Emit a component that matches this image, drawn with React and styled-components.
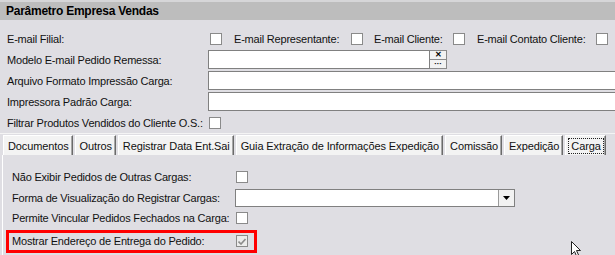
import React from 'react'
import styled, { createGlobalStyle } from 'styled-components'

const GlobalStyle = createGlobalStyle`
    html, body {
        margin: 0;
        padding: 0;
        background: #dfdee3;
    }
    body {
        font-family: "Liberation Sans", Arial, sans-serif;
        font-size: 11px;
        letter-spacing: -0.12px;
        color: #111;
    }
`

const Window = styled.div`
    position: relative;
    width: 615px;
    height: 255px;
    overflow: hidden;
    background: #dfdee3;
`

const Header = styled.div`
    height: 18px;
    border-top: 2px solid #d6d6d8;
    background: #bdbdbd;
    display: flex;
    align-items: center;
    padding-left: 6px;
    font-weight: bold;
    font-size: 12px;
    letter-spacing: -0.25px;
    color: #000;
`

const Form = styled.div`
    display: flex;
    flex-direction: column;
    padding: 8px 0 0 7px;
`

const Row = styled.div`
    display: flex;
    align-items: center;
    height: 21px;
`

const Label = styled.span`
    flex: none;
    width: ${p => p.$w}px;
    margin-left: ${p => p.$ml || 0}px;
    white-space: nowrap;
    letter-spacing: -0.2px;
`

const Check = styled.span`
    flex: none;
    box-sizing: border-box;
    width: 12px;
    height: 12px;
    margin-left: ${p => p.$ml || 0}px;
    border: 1px solid #8a8a8a;
    background: ${p => (p.$checked ? '#ececec' : '#fff')};
    display: flex;
    align-items: center;
    justify-content: center;
`

const Input = styled.div`
    flex: none;
    box-sizing: border-box;
    width: ${p => p.$w}px;
    height: 19px;
    background: #fff;
    border: 1px solid #808080;
`

const SideButtons = styled.div`
    display: flex;
    flex-direction: column;
    height: 19px;
`

const MiniButton = styled.div`
    box-sizing: border-box;
    width: 17px;
    height: 9.5px;
    border: 1px solid #8a8a8a;
    border-left: none;
    background: #f2f2f2;
    display: flex;
    align-items: center;
    justify-content: center;
    font-size: 8px;
    font-weight: bold;
    line-height: 1;
    color: #000;
    & + & {
        border-top: none;
    }
`

const TabStrip = styled.div`
    display: flex;
    padding: 1px 0 0 3px;
    border-top: 1px solid #f4f4f4;
`

const Tab = styled.div`
    box-sizing: border-box;
    height: 20px;
    padding: 0 3px 0 4px;
    margin-right: 2px;
    display: flex;
    align-items: center;
    background: #f3f3f3;
    border-left: 1px solid #fff;
    border-top: 1px solid #fff;
    border-right: 1px solid #6a6a6a;
    box-shadow: inset -1px 0 0 #a8a8a8;
    white-space: nowrap;
`

const FocusText = styled.span`
    outline: 1px dotted #222;
    outline-offset: 1px;
    padding: 0 1px;
`

const Panel = styled.div`
    display: flex;
    flex-direction: column;
    margin-left: 2px;
    padding: 12px 0 0 9px;
    border-left: 1px solid #fff;
    height: 100px;
`

const PanelRow = styled.div`
    display: flex;
    align-items: center;
    height: 20.5px;
`

const Highlight = styled.div`
    display: flex;
    align-items: center;
    box-sizing: border-box;
    width: 251px;
    height: 23px;
    margin: 1px 0 0 -6px;
    padding-left: 3px;
    border: 3px solid #ff0000;
`

const Select = styled.div`
    flex: none;
    box-sizing: border-box;
    width: 280px;
    height: 18px;
    background: #fff;
    border: 1px solid #808080;
    display: flex;
    justify-content: flex-end;
`

const SelectArrow = styled.div`
    width: 15px;
    border-left: 1px solid #9a9a9a;
    background: #f2f2f2;
    display: flex;
    align-items: center;
    justify-content: center;
`

const Cursor = styled.svg`
    position: absolute;
    left: 571px;
    top: 241px;
`

export default function App() {
    return (
        <Window>
            <GlobalStyle />
            <Header>Parâmetro Empresa Vendas</Header>
            <Form>
                <Row>
                    <Label $w={203}>E-mail Filial:</Label>
                    <Check />
                    <Label $w={117} $ml={12}>E-mail Representante:</Label>
                    <Check />
                    <Label $w={79} $ml={11}>E-mail Cliente:</Label>
                    <Check />
                    <Label $w={119} $ml={12}>E-mail Contato Cliente:</Label>
                    <Check />
                </Row>
                <Row>
                    <Label $w={201}>Modelo E-mail Pedido Remessa:</Label>
                    <Input $w={222} />
                    <SideButtons>
                        <MiniButton>✕</MiniButton>
                        <MiniButton>···</MiniButton>
                    </SideButtons>
                </Row>
                <Row>
                    <Label $w={201}>Arquivo Formato Impressão Carga:</Label>
                    <Input $w={420} />
                </Row>
                <Row>
                    <Label $w={201}>Impressora Padrão Carga:</Label>
                    <Input $w={420} />
                </Row>
                <Row>
                    <Label $w={202}>Filtrar Produtos Vendidos do Cliente O.S.:</Label>
                    <Check />
                </Row>
            </Form>
            <TabStrip>
                <Tab>Documentos</Tab>
                <Tab>Outros</Tab>
                <Tab>Registrar Data Ent.Sai</Tab>
                <Tab>Guia Extração de Informações Expedição</Tab>
                <Tab>Comissão</Tab>
                <Tab>Expedição</Tab>
                <Tab><FocusText>Carga</FocusText></Tab>
            </TabStrip>
            <Panel>
                <PanelRow>
                    <Label $w={224}>Não Exibir Pedidos de Outras Cargas:</Label>
                    <Check />
                </PanelRow>
                <PanelRow>
                    <Label $w={223}>Forma de Visualização do Registrar Cargas:</Label>
                    <Select>
                        <SelectArrow>
                            <svg width="7" height="4" viewBox="0 0 7 4">
                                <path d="M0 0h7L3.5 4z" fill="#000" />
                            </svg>
                        </SelectArrow>
                    </Select>
                </PanelRow>
                <PanelRow>
                    <Label $w={224}>Permite Vincular Pedidos Fechados na Carga:</Label>
                    <Check />
                </PanelRow>
                <Highlight>
                    <Label $w={224}>Mostrar Endereço de Entrega do Pedido:</Label>
                    <Check $checked>
                        <svg width="8" height="7" viewBox="0 0 8 7">
                            <path d="M0.5 3.5l2.5 2.5 4.5-5" stroke="#8c8c8c" strokeWidth="1.6" fill="none" />
                        </svg>
                    </Check>
                </Highlight>
            </Panel>
            <Cursor width="12" height="16" viewBox="0 0 12 16">
                <path d="M0.5 0.5v13l3-3 2 4.5 2-1-2-4.5h4z" fill="#fff" stroke="#222" strokeWidth="1" />
            </Cursor>
        </Window>
    )
}
